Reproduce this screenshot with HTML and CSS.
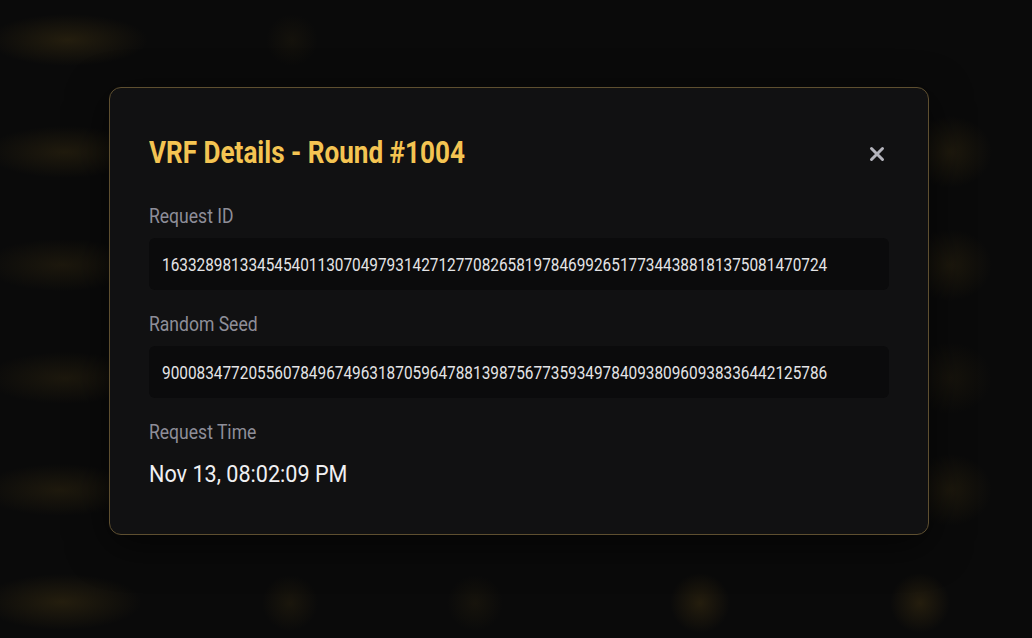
FILE: index.html
```html
<!DOCTYPE html>
<html lang="en">
<head>
<meta charset="utf-8">
<title>VRF Details</title>
<link rel="stylesheet" href="styles.css">
</head>
<body>
<div class="overlay">
  <div class="modal" role="dialog" aria-labelledby="modal-title">
    <div class="modal-header">
      <h2 id="modal-title" class="modal-title"><span class="narrow">VRF Details - Round #1004</span></h2>
      <button class="close-btn" aria-label="Close">
        <svg width="16" height="16" viewBox="0 0 16 16" aria-hidden="true">
          <path d="M2.5 2.5 L13.5 13.5 M13.5 2.5 L2.5 13.5" stroke="#b4b4bc" stroke-width="3" stroke-linecap="round"/>
        </svg>
      </button>
    </div>
    <div class="field">
      <div class="field-label"><span class="narrow">Request ID</span></div>
      <div class="field-box"><span class="narrow">16332898133454540113070497931427127708265819784699265177344388181375081470724</span></div>
    </div>
    <div class="field">
      <div class="field-label"><span class="narrow">Random Seed</span></div>
      <div class="field-box"><span class="narrow">90008347720556078496749631870596478813987567735934978409380960938336442125786</span></div>
    </div>
    <div class="field">
      <div class="field-label"><span class="narrow">Request Time</span></div>
      <div class="field-value"><span class="narrow">Nov 13, 08:02:09 PM</span></div>
    </div>
  </div>
</div>
</body>
</html>
```

FILE: styles.css
```css
* { box-sizing: border-box; }
html, body { height: 100%; }
body {
  margin: 0;
  background-color: #0a0a0a;
  background-image:
    radial-gradient(ellipse 80px 26px at 68px 40px, rgba(110, 85, 25, 0.26), transparent),
    radial-gradient(ellipse 80px 26px at 65px 152px, rgba(110, 85, 25, 0.22), transparent),
    radial-gradient(ellipse 80px 26px at 62px 265px, rgba(110, 85, 25, 0.18), transparent),
    radial-gradient(ellipse 80px 26px at 65px 378px, rgba(110, 85, 25, 0.18), transparent),
    radial-gradient(ellipse 80px 26px at 60px 490px, rgba(110, 85, 25, 0.20), transparent),
    radial-gradient(ellipse 80px 28px at 62px 602px, rgba(110, 85, 25, 0.26), transparent),
    radial-gradient(circle 26px at 292px 40px, rgba(110, 85, 25, 0.10), transparent),
    radial-gradient(circle 28px at 290px 603px, rgba(110, 85, 25, 0.16), transparent),
    radial-gradient(circle 28px at 475px 603px, rgba(110, 85, 25, 0.12), transparent),
    radial-gradient(circle 30px at 700px 603px, rgba(120, 90, 25, 0.24), transparent),
    radial-gradient(circle 30px at 920px 603px, rgba(120, 90, 25, 0.24), transparent),
    radial-gradient(ellipse 42px 36px at 950px 152px, rgba(110, 85, 25, 0.20), transparent),
    radial-gradient(ellipse 42px 36px at 950px 265px, rgba(110, 85, 25, 0.18), transparent),
    radial-gradient(ellipse 42px 36px at 950px 378px, rgba(110, 85, 25, 0.12), transparent),
    radial-gradient(ellipse 42px 36px at 950px 490px, rgba(110, 85, 25, 0.18), transparent);
  font-family: "Roboto", "Liberation Sans", sans-serif;
  color: #e8e8e8;
}
.narrow {
  display: inline-block;
  white-space: nowrap;
  transform-origin: left center;
}
.overlay {
  min-height: 100%;
  padding: 87px 0 0 109px;
}
.modal {
  width: 820px;
  height: 448px;
  background: #111112;
  border: 1px solid #5e4f30;
  border-radius: 12px;
  padding: 40px 39px 0 39px;
  box-shadow: 0 10px 40px rgba(0, 0, 0, 0.6);
}
.modal-header {
  display: flex;
  align-items: center;
  justify-content: space-between;
  height: 48px;
  margin-bottom: 30px;
}
.modal-title {
  margin: 0;
  font-size: 32px;
  font-weight: 700;
  color: #f4c452;
  line-height: 1;
}
.modal-title .narrow { transform: scaleX(0.815); }
.close-btn {
  background: none;
  border: 0;
  padding: 0;
  margin-right: 2px;
  margin-top: 4px;
  width: 20px;
  height: 20px;
  display: flex;
  align-items: center;
  justify-content: center;
  cursor: pointer;
}
.field { margin-bottom: 24px; }
.field-label {
  font-size: 19.5px;
  font-weight: 400;
  color: #8e8e99;
  line-height: 22px;
  margin-bottom: 10px;
}
.field-label .narrow { transform: scaleX(0.9); }
.field-box {
  background: #0b0b0c;
  border-radius: 6px;
  height: 52px;
  display: flex;
  align-items: center;
  padding: 0 13px;
  font-size: 18px;
  color: #e4e4e6;
}
.field-box .narrow { transform: scaleX(0.854); }
.field-value {
  font-size: 24px;
  color: #f0f0f2;
  line-height: 28px;
  margin-top: 16px;
}
.field-value .narrow { transform: scaleX(0.9); }
```
